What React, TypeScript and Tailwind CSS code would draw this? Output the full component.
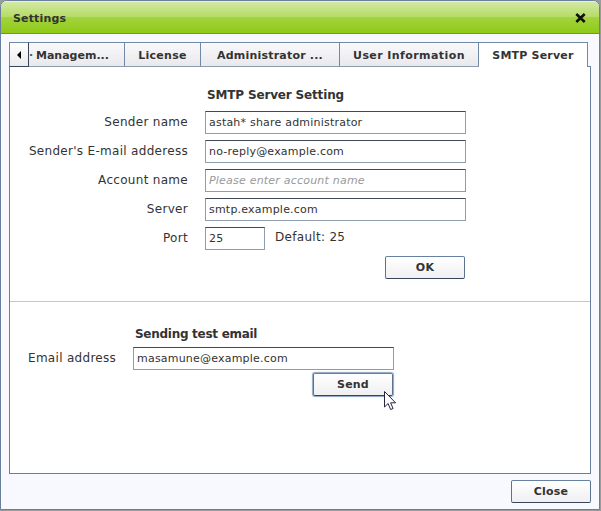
import type { ReactNode } from "react";

const input =
  "h-[23px] border border-[#8c9db0] border-t-[#3d4a5c] bg-white pl-[3px] text-[11px] tracking-[0.21px] text-[#333] outline-none placeholder:italic placeholder:text-[#999]";

const tab =
  "flex h-[25px] items-center justify-center whitespace-nowrap border border-l-0 border-t-[#7289a5] border-r-[#7289a5] border-b-[#8c9db0] bg-linear-to-b from-[#f9f9fc] to-[#e9e9ed] pt-[3px] font-bold";

function Button({ children, focused }: { children: ReactNode; focused?: boolean }) {
  return (
    <button
      className={
        "h-[23px] w-20 rounded-[2px] border border-[#5b7290] border-t-[#6580a0] border-b-[#36455a] bg-linear-to-b from-white to-[#f0f0f2] text-[11px] leading-[20px] font-bold tracking-[0.2px] " +
        (focused ? "shadow-[0_0_1px_1px_#8da5c2]" : "")
      }
    >
      {children}
    </button>
  );
}

function Field({ label, value, placeholder }: { label: string; value?: string; placeholder?: string }) {
  return (
    <div className="flex h-[29px]">
      <label className="mr-[17px] w-[178px] pt-[3px] text-right text-xs tracking-[0.3px]">{label}</label>
      <input className={input + " w-[261px]"} defaultValue={value} placeholder={placeholder} />
    </div>
  );
}

export default function App() {
  return (
    <div className="h-[511px] w-[601px] overflow-hidden bg-[#999c9d] font-['DejaVu_Sans',Verdana,sans-serif] text-[11px] text-[#333]">
      <div className="flex h-[510px] w-[600px] flex-col overflow-hidden rounded-t-[7px] border border-[#68809d] bg-[#f8f9ff]">
        <header className="flex h-[33px] shrink-0 items-center justify-between border-t border-b border-t-[#e8f2d0] border-b-[#719b16] bg-[linear-gradient(#d4e8a4_0%,#b5dc66_48%,#a3d33d_50%,#8fca18_100%)] pr-[13px] pl-3">
          <span className="pt-[3px] font-bold tracking-[0.15px]">Settings</span>
          <svg width="11" height="10" viewBox="0 0 11 10" stroke="#111" strokeWidth="2.6">
            <path d="M1.3 1L9.7 9M9.7 1L1.3 9" />
          </svg>
        </header>

        <div className="relative z-10 mt-2 ml-2 flex h-[25px] shrink-0">
          <div className="flex h-[25px] w-5 items-center justify-center border border-[#7289a5] border-r-[#36455a] border-b-[#36455a] bg-linear-to-b from-white to-[#ebebee]">
            <svg width="4" height="8" viewBox="0 0 4 8">
              <path d="M4 0v8L0 4z" fill="#000" />
            </svg>
          </div>
          <div className={tab + " w-24 justify-start!"}>
            <span className="w-[7px] text-[#3d5878]">·</span>
            <span>Managem...</span>
          </div>
          <div className={tab + " w-[76px] tracking-[0.3px]"}>License</div>
          <div className={tab + " w-[139px] tracking-[0.2px]"}>Administrator ...</div>
          <div className={tab + " w-[139px] tracking-[0.42px]"}>User Information</div>
          <div className="flex h-[25px] w-[109px] items-center justify-center border border-l-0 border-b-0 border-[#7289a5] bg-white pt-[3px] font-bold tracking-[0.2px]">
            SMTP Server
          </div>
        </div>

        <main className="-mt-px ml-2 h-[408px] w-[582px] shrink-0 border border-[#68809d] bg-white">
          <section className="h-[235px] border-b border-[#c0c9c9] pt-5">
            <h2 className="ml-[197px] h-6 text-xs font-bold tracking-[-0.16px]">SMTP Server Setting</h2>
            <Field label="Sender name" value="astah* share administrator" />
            <Field label="Sender's E-mail adderess" value="no-reply@example.com" />
            <Field label="Account name" placeholder="Please enter account name" />
            <Field label="Server" value="smtp.example.com" />
            <div className="flex h-[29px]">
              <label className="mr-[17px] w-[178px] pt-[3px] text-right text-xs tracking-[0.3px]">Port</label>
              <input className={input + " w-[60px]"} defaultValue="25" />
              <span className="ml-[10px] pt-[2px] text-xs tracking-[0.3px]">Default: 25</span>
            </div>
            <div className="ml-[375px]">
              <Button>OK</Button>
            </div>
          </section>

          <section className="pt-[24px]">
            <h2 className="ml-[125px] h-[21px] text-xs font-bold tracking-[-0.28px]">Sending test email</h2>
            <div className="flex">
              <label className="w-[123px] pt-[3px] pl-[18px] text-xs tracking-[0.3px]">Email address</label>
              <input className={input + " w-[261px]"} defaultValue="masamune@example.com" />
            </div>
            <div className="relative mt-[3px] ml-[303px] w-20">
              <Button focused>Send</Button>
              <svg className="absolute top-[18px] left-[71px]" width="13" height="20" viewBox="0 0 13 20">
                <path
                  d="M.5.5v15.5l3.6-3.5 2.5 6 2.5-1-2.5-5.7h5z"
                  fill="#fff"
                  stroke="#252540"
                />
              </svg>
            </div>
          </section>
        </main>

        <footer className="mt-[6px] ml-[510px]">
          <Button>Close</Button>
        </footer>
      </div>
    </div>
  );
}
